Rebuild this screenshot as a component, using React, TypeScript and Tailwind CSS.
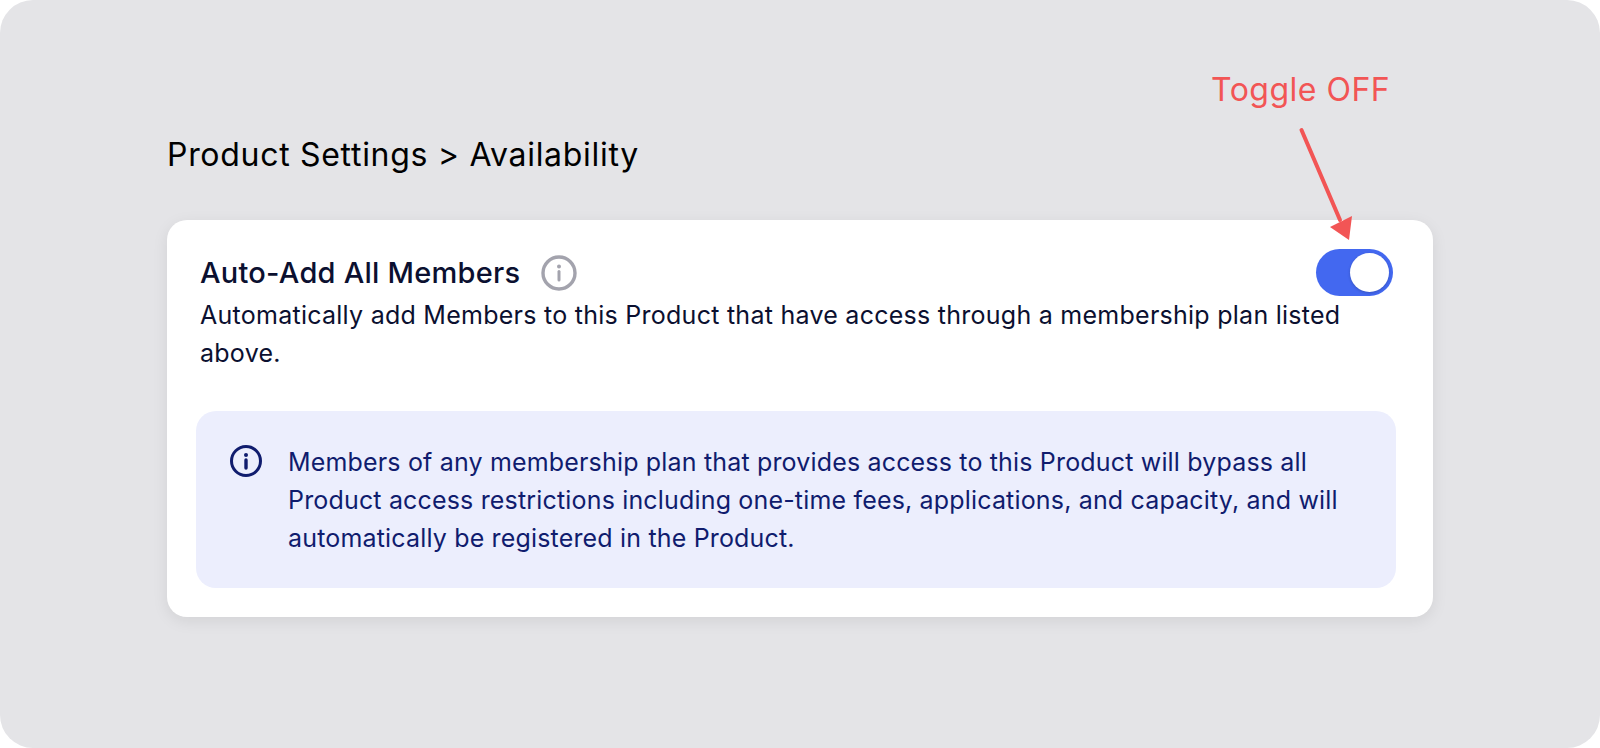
const App = () => {
  return (
    <div className="h-[748px] w-[1600px] overflow-hidden bg-white font-['Inter','Liberation_Sans',sans-serif]">
      <div className="relative flex h-full flex-col rounded-[33px] bg-[#e4e4e7] pl-[167px] pr-[167px] pt-[135px]">
        {/* annotation over the card */}
        <div className="absolute left-[1211px] top-[70px] text-[32px] leading-[40px] tracking-[0.5px] text-[#f25555]">Toggle OFF</div>
        <svg className="absolute left-[1290px] top-[120px] z-10" width="80" height="130" viewBox="0 0 80 130" fill="none">
          <path d="M11.5 10 L50 100" stroke="#f25555" strokeWidth="4" strokeLinecap="round" />
          <path d="M59 120 L40 107 L62 96 Z" fill="#f25555" />
        </svg>

        <h1 className="text-[32px] font-normal leading-[40px] tracking-[0.7px] text-black">Product Settings &gt; Availability</h1>

        <div className="mt-[45px] flex h-[397px] flex-col rounded-[20px] bg-white pl-[33px] pr-[37px] pt-[29px] shadow-[0_4px_16px_rgba(0,0,0,0.08)]">
          <div className="flex items-start justify-between">
            <div className="flex items-center gap-[21px]">
              <span className="pt-[1px] text-[29px] font-[550] leading-[46px] tracking-[0.25px] text-[#0b1030]">Auto-Add All Members</span>
              <svg width="36" height="36" viewBox="0 0 36 36" fill="none">
                <circle cx="18" cy="18" r="16" stroke="#a3a3ad" strokeWidth="3.4" />
                <circle cx="18" cy="11.5" r="2" fill="#a3a3ad" />
                <path d="M18 16.5V25" stroke="#a3a3ad" strokeWidth="3" strokeLinecap="round" />
              </svg>
            </div>
            <div className="mr-[3px] flex h-[47px] w-[77px] items-center justify-end rounded-full bg-[#4368f0] pr-[4px]">
              <div className="h-[39px] w-[39px] rounded-full bg-white shadow-[0_1px_3px_rgba(0,0,0,0.2)]" />
            </div>
          </div>
          <p className="w-[1160px] text-[25px] leading-[38px] tracking-[0.26px] text-[#0b1030]">
            Automatically add Members to this Product that have access through a membership plan listed above.
          </p>

          <div className="-ml-[4px] mt-[39px] flex h-[177px] gap-[26px] rounded-[20px] bg-[#eceefd] pl-[34px] pr-[30px] pt-[32px]">
            <svg className="mt-[2px] shrink-0" width="32" height="32" viewBox="0 0 32 32" fill="none">
              <circle cx="16" cy="16" r="14.5" stroke="#101c6e" strokeWidth="3" />
              <circle cx="16" cy="10" r="2" fill="#101c6e" />
              <path d="M16 15V23" stroke="#101c6e" strokeWidth="3.4" strokeLinecap="round" />
            </svg>
            <p className="text-[25px] leading-[38px] tracking-[0.17px] text-[#101c6e]">
              Members of any membership plan that provides access to this Product will bypass all Product access restrictions including one-time fees, applications, and capacity, and will automatically be registered in the Product.
            </p>
          </div>
        </div>
      </div>
    </div>
  );
};

export default App;
